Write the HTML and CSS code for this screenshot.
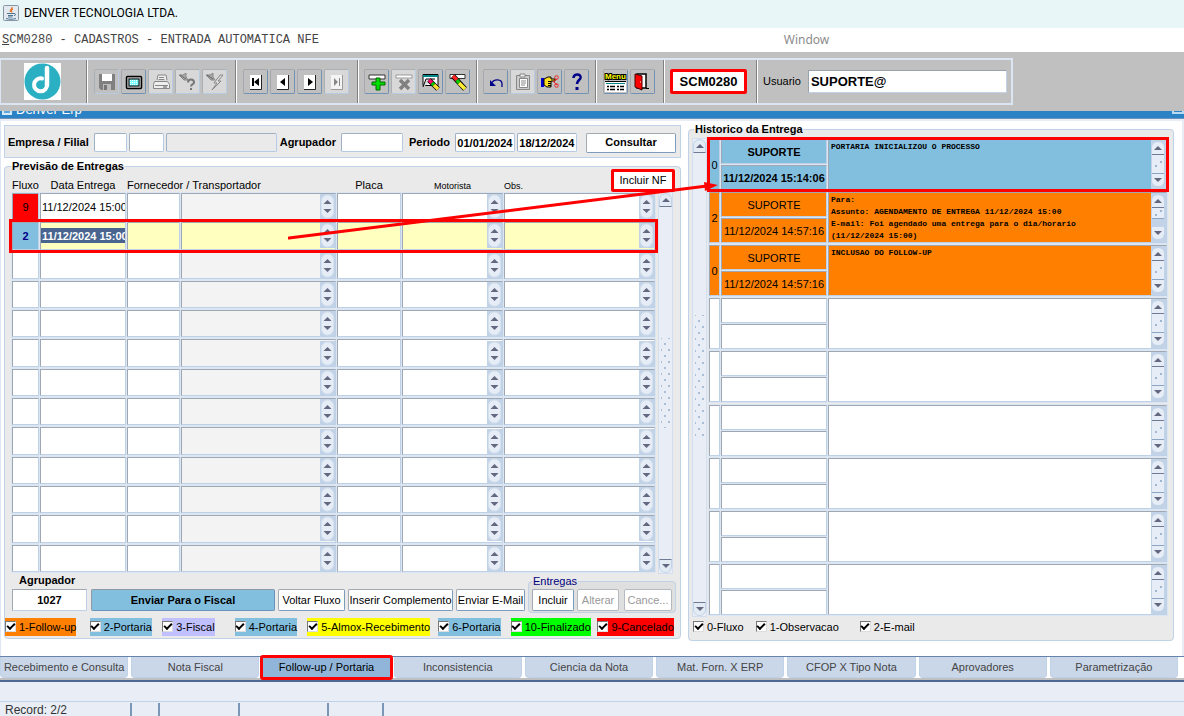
FILE: index.html
```html
<!DOCTYPE html>
<html lang="pt-BR">
<head>
<meta charset="utf-8">
<title>DENVER TECNOLOGIA LTDA.</title>
<link rel="stylesheet" href="styles.css">
</head>
<body>
<header class="titlebar">
  <svg class="java" viewBox="0 0 16 16" width="16" height="16"><rect x=".5" y=".5" width="15" height="15" rx="1" fill="#e3e9ee" stroke="#8796a3"/><path d="M9 2c1 2-3 2.500-1.500 5M10 4c-2 1-2 1.500-1 3.500" stroke="#e8762c" stroke-width="1.300" fill="none"/><path d="M4 8.500h7c2 0 2 2 0 2.300M5 10.500h5M5 12h4.500M3 13.500c3 1 7 1 10 0" stroke="#4c7396" fill="none"/></svg>
  <span>DENVER TECNOLOGIA LTDA.</span>
</header>
<nav class="menubar">
  <a class="program" href="#"><u>S</u>CM0280 - CADASTROS - ENTRADA AUTOMATICA NFE</a>
  <a class="window-menu" href="#">Window</a>
</nav>
<div class="toolband">
  <div class="toolbar">
    <div class="group logo">
      <svg viewBox="0 0 37 37" width="37" height="37"><rect width="37" height="37" fill="#fff"/><circle cx="18.500" cy="18.500" r="18" fill="#2bafc2"/><path d="M23 5v17" fill="none" stroke="#fff" stroke-width="4.500" stroke-linecap="round"/><path d="M23 21a6.500 6.500 0 1 1-5-5.500" fill="none" stroke="#fff" stroke-width="4" stroke-linecap="round"/></svg>
    </div>
    <div class="group">
      <button class="tool off" aria-label="Salvar"><svg viewBox="0 0 18 18"><path d="M1 1h16v16H3l-2-2z" fill="#808080"/><path d="M4 1h10v7H4z" fill="#fff"/><path d="M5 11h8v6H5z" fill="#bbb"/><path d="M6 12h3v5H6z" fill="#777"/></svg></button>
      <button class="tool" aria-label="Tela"><svg viewBox="0 0 18 18"><rect x="1.500" y="3.500" width="15" height="12" rx="1" fill="#c0c0c0" stroke="#000" stroke-width="1.500"/><rect x="4" y="6" width="10" height="7" fill="#7ff" stroke="#000"/><path d="M5 7.500h8M5 9.500h8M5 11.500h8" stroke="#fff" stroke-dasharray="1 1"/></svg></button>
      <button class="tool off pale" aria-label="Imprimir"><svg viewBox="0 0 18 18"><path d="M5 7l1-5h8l1 5M2.500 8.500h13l2 3v4h-16v-4z" fill="#eee" stroke="#888"/><path d="M7 4.500h5M6.500 6.500h6M3 12.500h13" stroke="#888"/><path d="M11 14h4" stroke="#555"/></svg></button>
      <button class="tool off pale" aria-label="Entrar consulta"><svg viewBox="0 0 18 18"><path d="M0 2h4l3-2v4l2 3H5z" stroke="#888" fill="#aaa"/><path d="M1 2l6 4" stroke="#666"/><path d="M9 9.500c0-4 6-4 6 0 0 2-3 1.500-3 4M12 15v2" stroke="#777" stroke-width="2" fill="none"/></svg></button>
      <button class="tool off pale" aria-label="Executar consulta"><svg viewBox="0 0 18 18"><path d="M0 2h4l3-2v4l2 3H5z" stroke="#888" fill="#aaa"/><path d="M1 2l6 4" stroke="#666"/><path d="M14 2l-6 8h3l-5 7 9-9h-3l5-6z" stroke="#888" fill="#ddd"/></svg></button>
    </div>
    <div class="group">
      <button class="tool" aria-label="Primeiro"><svg viewBox="0 0 18 18"><path d="M3 2h11v14H3z" fill="#fff"/><path d="M14.500 2v14.500H3" stroke="#222" fill="none"/><path d="M5 5h2v8H5zM12 5v8L7 9z"/></svg></button>
      <button class="tool" aria-label="Anterior"><svg viewBox="0 0 18 18"><path d="M3 2h11v14H3z" fill="#fff"/><path d="M14.500 2v14.500H3" stroke="#222" fill="none"/><path d="M11 5v8L6 9z"/></svg></button>
      <button class="tool" aria-label="Proximo"><svg viewBox="0 0 18 18"><path d="M3 2h11v14H3z" fill="#fff"/><path d="M14.500 2v14.500H3" stroke="#222" fill="none"/><path d="M7 5v8l5-4z"/></svg></button>
      <button class="tool off pale" aria-label="Ultimo"><svg viewBox="0 0 18 18"><path d="M3 2h11v14H3z" fill="#f4f4f4"/><path d="M14.500 2v14.500H3" stroke="#999" fill="none"/><path d="M11 5h1v8h-1zM6 5v8l4-4z" fill="#888"/></svg></button>
    </div>
    <div class="group tight">
      <button class="tool" aria-label="Inserir"><svg viewBox="0 0 18 18"><path d="M1 2h16v4H1z" fill="#fff" stroke="#333"/><path d="M8 5h4v4h5v3h-5v5H8v-5H4V9h4z" fill="#0d0" stroke="#060"/></svg></button>
      <button class="tool off pale" aria-label="Remover"><svg viewBox="0 0 18 18"><path d="M1 2h16v3H1z" fill="#fff" stroke="#999"/><path d="M5 7l9 9M14 7l-9 9" stroke="#808080" stroke-width="3.500"/></svg></button>
      <button class="tool" aria-label="Limpar bloco"><svg viewBox="0 0 18 18"><path d="M1 1.500h15v11H1z" fill="#fff" stroke="#000"/><path d="M1 3h15" stroke="#088" stroke-width="2"/><path d="M1 14l3-8h9" stroke="#000" fill="#ddd"/><path d="M7 7l9 9" stroke="#000" stroke-width="5"/><path d="M7 7l3 3" stroke="#f06" stroke-width="3.500"/><path d="M10 10l2 2" stroke="#0c0" stroke-width="3.500"/><path d="M12 12l4 4" stroke="#fd3" stroke-width="3.500"/></svg></button>
      <button class="tool" aria-label="Limpar registro"><svg viewBox="0 0 18 18"><path d="M1 1.500h15v4H1z" fill="#fff" stroke="#333"/><path d="M4 3l12 13" stroke="#000" stroke-width="5"/><path d="M4 3l4 4" stroke="#f22" stroke-width="3.500"/><path d="M8 7l2 3" stroke="#0c0" stroke-width="3.500"/><path d="M10 10l6 6" stroke="#fe3" stroke-width="3.500"/></svg></button>
    </div>
    <div class="group tight">
      <button class="tool" aria-label="Desfazer"><svg viewBox="0 0 18 18"><path d="M4 11c3-6 11-5 11 0v3" stroke="#008" stroke-width="1.300" fill="none"/><path d="M3 7v6h6z" fill="#008"/></svg></button>
      <button class="tool off pale" aria-label="Lista"><svg viewBox="0 0 18 18"><path d="M2.500 2.500h13v14h-13z" fill="#ccc" stroke="#888"/><path d="M5.500 5.500h8v9h-8z" fill="#fff" stroke="#888"/><path d="M6 1h5v3H6z" fill="#eee" stroke="#888"/><path d="M7 8h5M7 10h5M7 12h4" stroke="#888"/></svg></button>
      <button class="tool" aria-label="Editar"><svg viewBox="0 0 18 18"><path d="M0 5h3v9H0z" fill="#00c"/><path d="M3 6l4-2h3v2h4v2h-4v6H6l-3-2z" fill="#fd2" stroke="#000"/><path d="M7 8.500h3M7 10.500h3M7 12.500h3" stroke="#000"/><path d="M12 9l4-3M12 8l4 4" stroke="#e22"/><circle cx="15.500" cy="4.500" r="1.800" fill="none" stroke="#e22"/><circle cx="15.500" cy="12.500" r="1.800" fill="none" stroke="#e22"/></svg></button>
      <button class="tool" aria-label="Ajuda"><svg viewBox="0 0 18 18"><path d="M5.500 5c0-5 8-4.500 7 0-.5 2-3.500 2.500-3.500 6" stroke="#008" stroke-width="2.600" fill="none"/><path d="M7.500 14h3v3h-3z" fill="#008"/></svg></button>
    </div>
    <div class="group">
      <button class="tool wide" aria-label="Menu"><svg viewBox="0 0 21 21"><text x="0" y="8" class="menu-word">Menu</text><path d="M0 11h21v10H0z" fill="#fff"/><path d="M0 10.500h21" stroke="#000"/><path d="M1 12.500h19" stroke="#088"/><path d="M2 15.500h17M2 18.500h17" stroke="#000" stroke-width="1.500" stroke-dasharray="2 1 5 2"/></svg></button>
      <button class="tool" aria-label="Sair"><svg viewBox="0 0 18 18"><path d="M3 1h9v14H3z" fill="#fff" stroke="#000" stroke-width="1.500"/><path d="M1 1l7 2v14l-7-3z" fill="#f00" stroke="#400"/><path d="M6 9h1" stroke="#fff"/><path d="M12 15.500h3" stroke="#000"/></svg></button>
    </div>
    <div class="group code-group"><span class="code">SCM0280</span></div>
    <div class="group user"><label for="usuario">Usuario</label><input id="usuario" value="SUPORTE@"></div>
  </div>
</div>
<div class="innertitle"><span class="inner-icon"></span><span class="inner-text">Denver Erp</span><span class="inner-button"></span></div>

<main class="content">
  <div class="left">
    <form class="filter">
      <label for="empresa">Empresa / Filial</label>
      <input id="empresa" class="w33"><input class="w35" aria-label="Filial"><input class="w111 shade" aria-label="Nome" readonly>
      <label for="agrup">Agrupador</label><input id="agrup" class="w62">
      <label for="de" class="period">Periodo</label><input id="de" class="w60" value="01/01/2024"><input class="w60" aria-label="Ate" value="18/12/2024">
      <button type="button" class="btn strong consult">Consultar</button>
    </form>
    <fieldset class="panel deliveries">
      <legend>Previsão de Entregas</legend>
      <button class="incluir-nf">Incluir NF</button>
      <div class="with-scroll">
        <table class="grid">
          <colgroup><col class="c27"><col class="c86"><col class="c52"><col class="c155"><col class="c64"><col class="c101"><col></colgroup>
          <thead><tr><th>Fluxo</th><th>Data Entrega</th><th colspan="2" class="start">Fornecedor / Transportador</th><th>Placa</th><th class="small">Motorista</th><th class="small start">Obs.</th></tr></thead>
          <tbody id="entregas"></tbody>
        </table>
        <div class="scroll"><span class="up"></span><span class="grip"></span><span class="down"></span></div>
      </div>
      <div class="actions">
        <div class="stack"><label for="grupo">Agrupador</label><input id="grupo" value="1027"></div>
        <button class="btn strong send">Enviar Para o Fiscal</button>
        <button class="btn w67">Voltar Fluxo</button>
        <button class="btn w105">Inserir Complemento</button>
        <button class="btn w68">Enviar E-Mail</button>
        <fieldset class="sub"><legend>Entregas</legend><button class="btn w42">Incluir</button><button class="btn w42" disabled>Alterar</button><button class="btn w48 apart" disabled>Cance...</button></fieldset>
      </div>
      <div class="checks flows">
        <label class="orange"><input type="checkbox" checked>1-Follow-up</label>
        <label class="sky"><input type="checkbox" checked>2-Portaria</label>
        <label class="lilac"><input type="checkbox" checked>3-Fiscal</label>
        <label class="sky"><input type="checkbox" checked>4-Portaria</label>
        <label class="yellow"><input type="checkbox" checked>5-Almox-Recebimento</label>
        <label class="sky"><input type="checkbox" checked>6-Portaria</label>
        <label class="green"><input type="checkbox" checked>10-Finalizado</label>
        <label class="red"><input type="checkbox" checked>9-Cancelado</label>
      </div>
    </fieldset>
  </div>
  <fieldset class="panel history">
    <legend>Historico da Entrega</legend>
    <div class="with-scroll">
      <div class="scroll"><span class="up"></span><span class="grip"></span><span class="down"></span></div>
      <table class="log">
        <colgroup><col class="c11"><col class="c106"><col></colgroup>
        <tbody id="historico"></tbody>
      </table>
    </div>
    <div class="checks plain">
      <label><input type="checkbox" checked>0-Fluxo</label>
      <label><input type="checkbox" checked>1-Observacao</label>
      <label class="far"><input type="checkbox" checked>2-E-mail</label>
    </div>
  </fieldset>
  <svg class="arrow" width="430" height="60" viewBox="0 0 430 60"><path d="M1 57L419 5" stroke="#f00" stroke-width="3" stroke-linecap="round"/><path d="M430 4l-13 6-1-9z" fill="#f00"/></svg>
</main>

<nav class="tabs">
  <button>Recebimento e Consulta</button><button>Nota Fiscal</button><button class="active">Follow-up / Portaria</button><button>Inconsistencia</button><button>Ciencia da Nota</button><button>Mat. Forn. X ERP</button><button>CFOP X Tipo Nota</button><button>Aprovadores</button><button>Parametrização</button>
</nav>
<footer class="status">
  <div class="message"></div>
  <div class="record"><span class="s131">Record: 2/2</span><span class="s28"></span><span class="s80"></span><span class="s89"></span><span class="s55"></span></div>
</footer>
<script src="app.js"></script>
</body>
</html>
```
FILE: styles.css
```css
* { box-sizing: border-box; }
body { margin: 0; min-height: 100vh; display: flex; flex-direction: column; background: #e9eef6; font: 11px/13px "Liberation Sans", Arial, sans-serif; color: #000; overflow: hidden; }
button, input, textarea { font: inherit; color: inherit; margin: 0; padding: 0; }
svg { display: block; }
fieldset { margin: 0; min-width: 0; }

.titlebar { height: 28px; padding-left: 3px; display: flex; align-items: center; gap: 5px; background: #e8f6f7; padding-bottom: 3px; font: 12px/16px Roboto, "Noto Sans", sans-serif; }
.menubar { height: 24px; padding: 0 2px; display: flex; align-items: center; background: #fff; }
.menubar a { color: #444; text-decoration: none; }
.program { flex: 0 0 66%; font: 12px/14px "Liberation Mono", monospace; }
.menubar .window-menu { padding-left: 3px; color: #8c8c8c; font: 12px/16px "Noto Sans", sans-serif; }

.toolband { background: #c0c0c0; padding: 6px 0; }
.toolbar { display: flex; width: 1013px; max-width: 100%; height: 47px; border: 2px solid #dce6f2; border-left-width: 1px; }
.group { display: flex; align-items: center; gap: 2px; padding: 0 8px 0 7px; border-right: 1px solid #808080; box-shadow: 1px 0 #fff; }
.group.tight { padding: 0 6px 0 6px; }
.group.code-group { padding: 0 9px 0 6px; }
.group.logo { padding: 0 25px 0 23px; }
.group.user { border: 0; box-shadow: none; gap: 7px; padding: 0 4px 0 6px; flex: 1; }
.tool { width: 25px; height: 25px; display: grid; place-items: center; background: #c0c0c0; border: 1px solid; border-color: #a5a9ae #7292b4 #7292b4 #a5a9ae; border-radius: 2px; }
.tool.off { border-color: #abb0b5 #b7cbe2 #b7cbe2 #abb0b5; }
.tool.pale { background: #d8d8d8; }
.tool svg { width: 18px; height: 18px; }
.tool.wide svg { width: 21px; height: 21px; overflow: visible; }
.menu-word { font: bold 8px "Liberation Sans", sans-serif; fill: #ff0; stroke: #000; stroke-width: 2px; paint-order: stroke; }
.code { display: flex; align-items: center; justify-content: center; width: 77px; height: 25px; background: #fff; border: 3px solid #f00; border-radius: 2px; font: bold 13px/16px "Liberation Sans", sans-serif; }
.user input { flex: 1; min-width: 0; height: 23px; padding-left: 2px; border: 1px solid; border-color: #9aa3ad #c3d3e7 #c3d3e7 #9aa3ad; background: #fff; font: bold 13px/16px "Liberation Sans", sans-serif; }

.innertitle { height: 8px; display: flex; align-items: flex-end; gap: 4px; overflow: hidden; padding: 0 0 0 2px; background: #2b83c6; border-bottom: 1px solid #6f92bb; color: #fff; }
.inner-icon { width: 10px; height: 7px; margin-bottom: 3px; background: #5ea6dc; border: 2px solid #d5e9f8; }
.inner-text { font: 13px/17px "Liberation Sans", sans-serif; flex: 1; }
.inner-button { width: 12px; height: 7px; margin-bottom: 4px; border: 2px solid #b9daf2; }

.content { position: relative; display: flex; gap: 7px; padding: 2px 10px 15px 4px; background: #fff; border-top: 2px solid #e9eef6; border-bottom: 1px solid #6583ad; box-shadow: inset 1px 0 #dfe7f2, inset -2px 0 #e9eef6; }
.left { flex: 677 1 677px; min-width: 0; }
.history { flex: 486 1 486px; }
.panel { position: relative; background: #eaeaea; border: 1px solid #c0d2e8; border-radius: 4px; }
.panel > legend { font-weight: bold; line-height: 13px; padding: 0 1px; }

.filter { display: flex; align-items: center; gap: 2px; height: 33px; margin: 2px 0 2px; padding: 2px 4px 0 3px; background: #eaeaea; border: 1px solid #c0d2e8; font-weight: bold; }
.filter label { flex: none; padding: 0 3px 0 1px; }
.filter label:first-child { padding-left: 0; }
.filter label.period { padding-left: 4px; }
.filter input { min-width: 0; height: 19px; text-align: center; background: #fff; border: 1px solid; border-color: #9fb0c4 #b5cae4 #b5cae4 #9fb0c4; border-radius: 2px; }
.filter .shade { background: #eaeaea; }
.w33 { width: 33px; } .w35 { width: 35px; } .w111 { width: 111px; } .w62 { width: 62px; } .w60 { width: 60px; }
.w67 { width: 67px; } .w105 { width: 105px; } .w68 { width: 69px; } .w42 { width: 42px; } .w48 { width: 48px; }

.btn { height: 22px; flex: none; white-space: nowrap; background: #fff; border: 1px solid; border-color: #a3aab1 #7b9cbd #7b9cbd #a3aab1; border-radius: 2px; }
.btn:disabled { color: #999; border-color: #b4bac0; }
.btn.strong { font-weight: bold; }
.btn.consult { width: 90px; height: 20px; margin-left: auto; }

.deliveries { padding: 1px 7px 2px 0; }
.deliveries > legend { margin-left: 6px; }
.incluir-nf { position: absolute; top: -4px; right: 5px; width: 64px; height: 23px; z-index: 1; background: #fff; border: 3px solid #f00; border-radius: 2px; white-space: nowrap; }
.with-scroll { display: flex; gap: 2px; }
.grid, .log { flex: 1; min-width: 0; table-layout: fixed; border-spacing: 1px 2px; width: 100%; }
.grid { height: 400px; margin-left: 6px; }
.c27 { width: 27px; } .c86 { width: 86px; } .c52 { width: 53px; } .c155 { width: 155px; } .c64 { width: 64px; } .c101 { width: 101px; } .c11 { width: 11px; } .c106 { width: 106px; }
th { height: 15px; padding: 2px 0 0; font-weight: normal; line-height: 12px; white-space: nowrap; vertical-align: bottom; }
th.start { text-align: left; }
th.small { font-size: 9px; line-height: 10px; }
td { padding: 0; }
.grid td { height: 27px; background: #fff; border: 1px solid; border-color: #9fa8b2 #bfd1e7 #bfd1e7 #9fa8b2; box-shadow: 0 0 0 1px #dce6f2; }
.grid td input { display: block; width: 100%; height: 15px; border: 0; background: none; }
.grid td:first-child input { text-align: center; }
.grid td:nth-child(2) input { padding-left: 1px; }
.grid td.gray { background: #f3f3f3; }
.grid .cancelled td:first-child { background: #f00; }
.grid .current td { background: #ffffc0; }
.grid .current td:first-child { background: #82bfdf; color: #008; }
.grid .current input { font-weight: bold; }
.grid .current td:nth-child(2) input { background: #48648f; color: #fff; }
.grid .current { outline: 3px solid #f00; }
.field { display: flex; align-items: center; }
.spin { flex: none; width: 15px; height: 25px; padding: 0 1px; background: #c3d3e7; }

.scroll { flex: none; width: 15px; display: flex; flex-direction: column; justify-content: space-between; background: #e9eef6; border: 1px solid #d3dfee; }
.deliveries .scroll { margin-top: 18px; }
.up, .down { height: 14px; display: grid; place-items: center; background: #e3ebf5; border: 1px solid #c3d3e7; border-radius: 7px 7px 0 0; border-bottom-color: #6f7a94; }
.down { border-radius: 0 0 7px 7px; border-bottom-color: #c3d3e7; border-top-color: #6f7a94; }
.up::after, .down::after { content: ""; border: 4px solid transparent; border-top: 0; border-bottom-color: #63677f; }
.down::after { border: 4px solid transparent; border-bottom: 0; border-top-color: #63677f; }
.grip { height: 90px; width: 9px; align-self: center; background: radial-gradient(circle, #a9bfd8 1px, transparent 1px) 0 0 / 8px 12px, radial-gradient(circle, #a9bfd8 1px, transparent 1px) 4px 6px / 8px 12px; }
.history .grip { height: 125px; }

.actions { display: flex; align-items: flex-end; gap: 3px; padding: 0 0 0 7px; margin-right: -3px; }
.actions > .btn, .stack { margin-bottom: 2px; }
.stack { width: 75px; margin-right: 1px; font-weight: bold; }
.stack label { display: block; padding-left: 7px; margin-bottom: 2px; }
.stack input { width: 100%; height: 22px; text-align: center; background: #fff; border: 1px solid; border-color: #9fa8b2 #bfd1e7 #bfd1e7 #9fa8b2; }
.btn.send { flex: 1 1 0; min-width: 0; background: #82bfdf; border-color: #8d9aa5 #6c94bb #6c94bb #8d9aa5; }
.sub { flex: none; display: flex; gap: 3px; padding: 1px 3px 1px 3px; background: #dfdfdf; border: 1px solid #c0d2e8; border-radius: 4px; }
.sub legend { color: #000080; padding: 0 1px; }
.apart { margin-left: 2px; }

.checks { display: flex; margin: 5px 0 0; }
.flows { display: grid; grid-template-columns: 84fr 72fr 72fr 72fr 130fr 72fr 86fr 79fr; justify-items: start; margin-right: -4px; }
.checks label { display: flex; align-items: center; height: 18px; gap: 3px; white-space: nowrap; padding-top: 1px; }
.checks input { appearance: none; width: 11px; height: 11px; margin: 0 0 2px; background: #fff; border: 1px solid #777; border-color: #777 #ddd #ddd #777; display: grid; place-items: center; }
.checks input:checked::after { content: ""; width: 6px; height: 3px; margin-bottom: 2px; border: solid #000; border-width: 0 0 2px 2px; transform: rotate(-45deg); }
.checks .far { margin-left: 9px; }
.orange { background: #ff8000; } .sky { background: #82bfdf; } .lilac { background: #c0c0ff; } .yellow { background: #ff0; } .green { background: #0f0; } .red { background: #f00; }
.checks.plain { gap: 12px; margin: 1px 0 0 1px; }

.history { padding: 2px 5px 4px 3px; margin-bottom: 0; }
.history > legend { margin-left: 2px; }
.history .with-scroll { gap: 1px; }
.history .log { height: 480px; border-spacing: 1px 2px; margin-top: -1px; }
.log td { height: 51px; }
.log input, .log textarea, .note { border: 1px solid; border-color: #9fa8b2 #bfd1e7 #bfd1e7 #9fa8b2; background: #fff; box-shadow: 0 0 0 1px #dce6f2; }
.log input { display: block; width: 100%; text-align: center; height: 25px; }
.log .num { height: 51px; }
.log .user-name { margin-bottom: 1px; }
.note { display: flex; height: 51px; }
.log .note textarea { flex: 1; min-width: 0; height: 49px; padding: 1px 2px; border: 0; box-shadow: none; resize: none; overflow: hidden; background: none; font: bold 8px/12px "Liberation Mono", monospace; }
.note svg { flex: none; background: #c3d3e7; }
.log .blue input, .log .blue .note { background: #82bfdf; }
.log .blue .date, .log .blue .user-name { font-weight: bold; }
.log .amber input, .log .amber .note { background: #ff8000; }
.log .blue { outline: 3px solid #f00; outline-offset: -1px; }

.arrow { position: absolute; left: 288px; top: 60px; z-index: 2; pointer-events: none; }

.tabs { display: flex; gap: 3px; height: 23px; padding: 0 6px 0 0; background: #fff; border-bottom: 2px solid #c0c0c0; box-shadow: 0 2px #4c6a95; }
.tabs button { flex: 1 1 0; min-width: 0; white-space: nowrap; color: #444; background: #cad7e9; border: 1px solid #c0d2e8; border-top: 0; border-radius: 0 0 4px 4px; }
.tabs .active { color: #000; background: #90b5d9; outline: 3px solid #f00; outline-offset: -1px; border-radius: 1px; z-index: 1; }

.status { margin-top: 2px; color: #333; }
.message { height: 20px; border-bottom: 1px solid #c0d2e8; border-radius: 5px 0 0 0; }
.record { display: flex; height: 16px; padding-top: 1px; font-size: 12px; line-height: 15px; }
.record span { border-right: 2px solid #7b97b8; }
.s131 { width: 132px; padding-left: 5px; } .s28 { width: 28px; } .s80 { width: 80px; } .s89 { width: 89px; } .s55 { width: 55px; }
```
FILE: app.js
```javascript
const spinner = '<svg class="spin" viewBox="0 0 13 25"><rect x=".5" y="1" width="12" height="23" rx="6" fill="#e6edf6" stroke="#d6e1ee"/><path d="M6.500 6l4 4h-8zM6.500 19l4-4h-8z" fill="#63677f"/></svg>';

const deliveries = [
  { flow: '9', date: '11/12/2024 15:00', kind: 'cancelled' },
  { flow: '2', date: '11/12/2024 15:00', kind: 'current' }
];
const columns = ['Fluxo', 'Data Entrega', 'Fornecedor', 'Transportador', 'Placa', 'Motorista', 'Obs.'];

let rows = '';
for (let i = 0; i < 13; i++) {
  const item = deliveries[i] || { flow: '', date: '', kind: '' };
  const values = [item.flow, item.date];
  rows += `<tr class="${item.kind}">` + columns.map((name, c) => {
    const spin = c === 3 || c > 4;
    return `<td class="${c === 3 ? 'gray' : ''}"><div class="field"><input aria-label="${name} ${i + 1}" value="${values[c] || ''}">${spin ? spinner : ''}</div></td>`;
  }).join('') + '</tr>';
}
document.getElementById('entregas').innerHTML = rows;

function noteScroll(short) {
  const end = short ? 25 : 33;
  return `<svg width="15" height="49" viewBox="0 0 15 49"><path d="M1 14V8q0-6 6-6t6 6v6zM1 15h12v${end - 15}H1zM1 34h12v6q0 6-6 6t-6-6z" fill="#e6edf6"/><path d="M1 14.500h12" stroke="#6f7a94"/><path d="M1 ${end + 0.5}h12" stroke="#8ba5c2"/><path d="M7 6l4 4H3zM7 42l4-4H3z" fill="#63677f"/><path d="M4 ${short ? 22 : 26}h2M9 ${short ? 18 : 22}h2" stroke="#9fb4cd" stroke-width="2"/></svg>`;
}

const history = [
  { num: '0', user: 'SUPORTE', date: '11/12/2024 15:14:06', kind: 'blue', text: 'PORTARIA INICIALIZOU O PROCESSO' },
  { num: '2', user: 'SUPORTE', date: '11/12/2024 14:57:16', kind: 'amber', text: 'Para:\nAssunto: AGENDAMENTO DE ENTREGA 11/12/2024 15:00\nE-mail: Foi agendado uma entrega para o dia/horario\n(11/12/2024 15:00)' },
  { num: '0', user: 'SUPORTE', date: '11/12/2024 14:57:16', kind: 'amber', text: 'INCLUSAO DO FOLLOW-UP' }
];
let log = '';
for (let i = 0; i < 9; i++) {
  const h = history[i] || { num: '', user: '', date: '', kind: '', text: '' };
  log += `<tr class="${h.kind}"><td><input class="num" aria-label="Tipo" value="${h.num}"></td><td><input class="user-name" aria-label="Usuario" value="${h.user}"><input class="date" aria-label="Data" value="${h.date}"></td><td><div class="note"><textarea aria-label="Texto">${h.text}</textarea>${noteScroll(i === 1)}</div></td></tr>`;
}
document.getElementById('historico').innerHTML = log;
```
